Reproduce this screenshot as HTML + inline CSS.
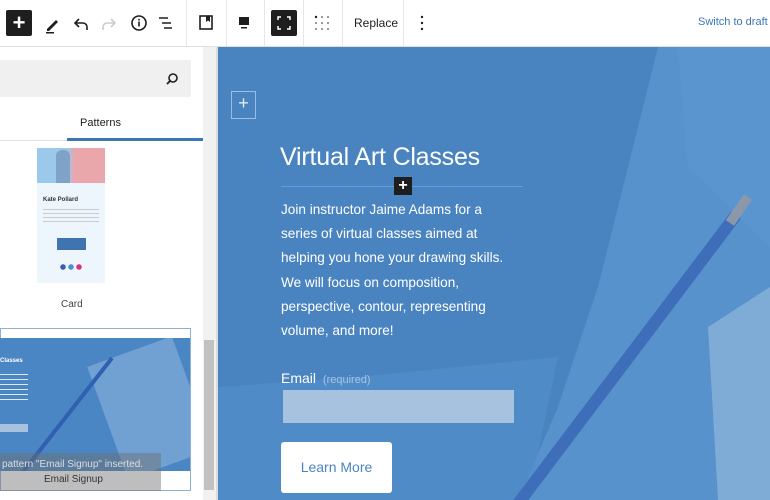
<!DOCTYPE html>
<html><head><style>
*{margin:0;padding:0;box-sizing:border-box}
body{width:770px;height:500px;overflow:hidden;font-family:"Liberation Sans",sans-serif;background:#fff;position:relative}
.a{position:absolute}
.tb{top:0;left:0;width:770px;height:47px;border-bottom:1px solid #e0e0e0;background:#fff}
.sep{top:0;width:1px;height:46px;background:#e6e6e6}
.t{color:#fff;font-family:"Liberation Sans",sans-serif;white-space:nowrap}
</style></head><body>
<div class="a tb">
 <div class="a" style="left:6px;top:10px;width:26px;height:26px;background:#1e1e1e;border-radius:2px;color:#fff;font-size:22px;line-height:25px;text-align:center;font-weight:bold">+</div>
 <svg class="a" style="left:40px;top:12px" width="24" height="24" viewBox="0 0 24 24"><path d="M7 17l9-9 2 2-9 9H7z" fill="#1e1e1e"/><rect x="6" y="20" width="8" height="1.5" fill="#1e1e1e"/></svg>
 <svg class="a" style="left:69px;top:12px" width="24" height="24" viewBox="0 0 24 24"><path d="M18 18v-3a4 4 0 0 0-4-4H7M10 7l-4 4 4 4" fill="none" stroke="#1e1e1e" stroke-width="1.6"/></svg>
 <svg class="a" style="left:97px;top:12px" width="24" height="24" viewBox="0 0 24 24"><path d="M6 18v-3a4 4 0 0 1 4-4h7M14 7l4 4-4 4" fill="none" stroke="#ccc" stroke-width="1.6"/></svg>
 <svg class="a" style="left:127px;top:11px" width="24" height="24" viewBox="0 0 24 24"><circle cx="12" cy="12" r="7" fill="none" stroke="#1e1e1e" stroke-width="1.6"/><rect x="11.2" y="10.5" width="1.6" height="5" fill="#1e1e1e"/><rect x="11.2" y="7.8" width="1.6" height="1.6" fill="#1e1e1e"/></svg>
 <svg class="a" style="left:154px;top:11px" width="24" height="24" viewBox="0 0 24 24"><path d="M5 7h9M8 12h9M10 17h8" stroke="#1e1e1e" stroke-width="1.6"/></svg>
 <div class="a sep" style="left:186px"></div>
 <svg class="a" style="left:194px;top:11px" width="24" height="24" viewBox="0 0 24 24"><rect x="6" y="5" width="12" height="13" fill="none" stroke="#1e1e1e" stroke-width="1.6"/><path d="M12 5h4v6l-2-1.5-2 1.5z" fill="#1e1e1e"/></svg>
 <div class="a sep" style="left:226px"></div>
 <svg class="a" style="left:232px;top:11px" width="24" height="24" viewBox="0 0 24 24"><rect x="7" y="6" width="10" height="8" fill="#1e1e1e"/><rect x="9" y="16" width="6" height="1.5" fill="#1e1e1e"/></svg>
 <div class="a sep" style="left:264px"></div>
 <div class="a" style="left:271px;top:10px;width:26px;height:26px;background:#1e1e1e;border-radius:2px"></div>
 <svg class="a" style="left:272px;top:11px" width="24" height="24" viewBox="0 0 24 24"><path d="M6 9V6h3M15 6h3v3M18 15v3h-3M9 18H6v-3" fill="none" stroke="#fff" stroke-width="1.5"/></svg>
 <div class="a sep" style="left:303px"></div>
 <svg class="a" style="left:310px;top:11px" width="24" height="24" viewBox="0 0 24 24" fill="#1e1e1e"><circle cx="6" cy="6" r="1.2"/><circle cx="12" cy="6" r="0.8"/><circle cx="18" cy="6" r="0.8"/><circle cx="6" cy="12" r="0.8"/><circle cx="12" cy="12" r="0.8"/><circle cx="18" cy="12" r="0.8"/><circle cx="6" cy="18" r="0.8"/><circle cx="12" cy="18" r="0.8"/><circle cx="18" cy="18" r="0.8"/></svg>
 <div class="a sep" style="left:342px"></div>
 <div class="a" style="left:354px;top:16px;font-size:12px;color:#1e1e1e">Replace</div>
 <div class="a sep" style="left:403px"></div>
 <svg class="a" style="left:410px;top:11px" width="24" height="24" viewBox="0 0 24 24" fill="#1e1e1e"><circle cx="12" cy="6" r="1.2"/><circle cx="12" cy="12" r="1.2"/><circle cx="12" cy="18" r="1.2"/></svg>
 <div class="a" style="left:698px;top:16px;font-size:11px;color:#3a76b8;white-space:nowrap">Switch to draft</div>
</div>
<!-- sidebar -->
<div class="a" style="left:0;top:60px;width:191px;height:37px;background:#f0f0f0;border-radius:2px"></div>
<svg class="a" style="left:163px;top:70px" width="18" height="18" viewBox="0 0 18 18"><circle cx="10" cy="8" r="4" fill="none" stroke="#1e1e1e" stroke-width="1.6"/><path d="M7 11l-3 3" stroke="#1e1e1e" stroke-width="1.8"/></svg>
<div class="a" style="left:0;top:140px;width:203px;height:1px;background:#e0e0e0"></div>
<div class="a" style="left:67px;top:138px;width:136px;height:3px;background:#3a76b8"></div>
<div class="a" style="left:80px;top:117px;font-size:11px;color:#1e1e1e">Patterns</div>
<div class="a" style="left:37px;top:148px;width:68px;height:135px;background:#eef6fd"></div>
<div class="a" style="left:37px;top:148px;width:68px;height:35px;background:linear-gradient(90deg,#9cc8ec 0 45%,#e9a7ac 55%)"></div>
<div class="a" style="left:56px;top:150px;width:14px;height:33px;background:#7fa3c6;border-radius:6px 6px 0 0"></div>
<div class="a" style="left:43px;top:197px;font-size:6px;font-weight:bold;color:#333">Kate Pollard</div>
<div class="a" style="left:43px;top:209px;width:56px;height:14px;background:repeating-linear-gradient(#ccc 0 1px,transparent 1px 4px)"></div>
<div class="a" style="left:57px;top:238px;width:29px;height:12px;background:#3f74ae"></div>
<div class="a" style="left:60px;top:264px;width:23px;height:6px;background:radial-gradient(circle at 3px 3px,#3a5bb8 2.5px,transparent 3px),radial-gradient(circle at 11px 3px,#4a8ed8 2.5px,transparent 3px),radial-gradient(circle at 19px 3px,#d4357a 2.5px,transparent 3px)"></div>
<div class="a" style="left:61px;top:299px;font-size:10px;color:#444">Card</div>
<div class="a" style="left:0;top:328px;width:191px;height:163px;border:1px solid #8fb0d6;background:#fff"></div>
<div class="a" style="left:0;top:338px;width:190px;height:133px;background:#4b86c4;overflow:hidden">
 <div class="a" style="left:105px;top:10px;width:90px;height:120px;background:#7aa6d6;transform:rotate(-20deg);opacity:.8"></div>
 <div class="a" style="width:4px;height:160px;background:#3060b0;transform:rotate(38deg);transform-origin:top;left:110px;top:20px"></div>
 <div class="a" style="left:0;top:20px;font-size:6px;font-weight:bold;color:#fff">Classes</div>
 <div class="a" style="left:0;top:36px;width:28px;height:30px;background:repeating-linear-gradient(#dde8f5 0 1px,transparent 1px 5px)"></div>
 <div class="a" style="left:0;top:86px;width:28px;height:8px;background:#a7c1df"></div>
</div>
<div class="a" style="left:0;top:453px;width:161px;height:38px;background:rgba(110,110,110,.45)"></div>
<div class="a" style="left:44px;top:474px;font-size:10px;color:#333">Email Signup</div>
<div class="a" style="left:2px;top:459px;font-size:10px;color:#ddd;white-space:nowrap">pattern "Email Signup" inserted.</div>
<div class="a" style="left:203px;top:47px;width:13px;height:453px;background:#f1f1f1"></div>
<div class="a" style="left:204px;top:340px;width:10px;height:150px;background:#c1c1c1"></div>
<div class="a" style="left:216px;top:47px;width:2px;height:453px;background:#dcdcdc"></div>
<!-- canvas -->
<svg class="a" style="left:218px;top:47px" width="552" height="453" viewBox="0 0 552 453">
 <rect width="552" height="453" fill="#4a84c0"/>
 <polygon points="440,0 552,0 552,453 300,453 340,360 380,240" fill="#5792cc"/>
 <polygon points="0,340 140,330 340,310 310,453 0,453" fill="#5390cb" opacity=".6"/>
 <polygon points="460,0 552,0 552,200 470,120" fill="#5b97d0" opacity=".6"/>
 <polygon points="490,280 552,240 552,453 500,453" fill="#8ab2da" opacity=".8"/>
 <line x1="290" y1="470" x2="518" y2="168" stroke="#3e6dba" stroke-width="12"/>
 <line x1="512" y1="176" x2="530" y2="150" stroke="#8a98aa" stroke-width="10"/>
</svg>
<div class="a" style="left:231px;top:91px;width:25px;height:28px;border:1px solid #9dbce0"></div>
<div class="a" style="left:231px;top:93px;width:25px;text-align:center;color:#e8f0fa;font-size:18px">+</div>
<div class="a t" style="left:280px;top:143px;font-size:25px;letter-spacing:-0.2px">Virtual Art Classes</div>
<div class="a" style="left:281px;top:186px;width:242px;height:1px;background:#6d9ccd"></div>
<div class="a" style="left:394px;top:177px;width:18px;height:18px;background:#1e1e1e;color:#fff;text-align:center;font-size:16px;line-height:18px;font-weight:bold">+</div>
<div class="a t" style="left:281px;top:198px;font-size:13.6px;line-height:24.2px">Join instructor Jaime Adams for a<br>series of virtual classes aimed at<br>helping you hone your drawing skills.<br>We will focus on composition,<br>perspective, contour, representing<br>volume, and more!</div>
<div class="a t" style="left:281px;top:370px;font-size:14px">Email <span style="font-size:11px;color:#a9c4e3;margin-left:3px">(required)</span></div>
<div class="a" style="left:283px;top:390px;width:231px;height:33px;background:#a6c2df"></div>
<div class="a" style="left:281px;top:442px;width:111px;height:51px;background:#fff;border-radius:3px;color:#4a85c4;font-size:14px;line-height:51px;text-align:center">Learn More</div>
</body></html>
